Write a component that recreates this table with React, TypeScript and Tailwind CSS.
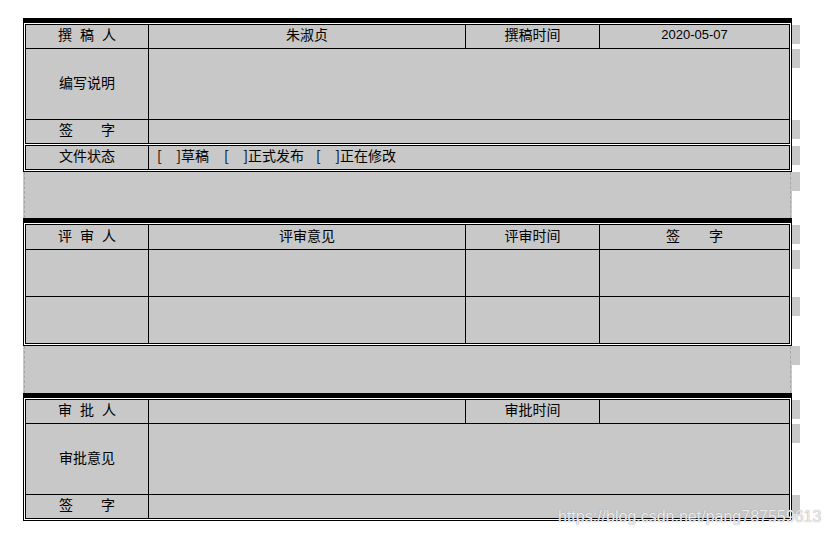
import React from 'react';

const cell = 'border-r border-b border-black flex items-center justify-center pb-[5px]';
const row24 = 'h-[24px]';

function Spread({ chars, className }: { chars: string[]; className: string }) {
  return (
    <span className={`flex ${className}`}>
      {chars.map((c, i) => (
        <span key={i}>{c}</span>
      ))}
    </span>
  );
}

// Word's row-end marker sitting just right of the table
function Marker() {
  return <span className="absolute left-[766px] top-0 w-[8px] h-[19px] bg-[#c8c8c8]" />;
}

function Gap({ h }: { h: string }) {
  return (
    <div className={`relative bg-[#c8c8c8] ${h}`}>
      <div className="ml-px w-[767px] h-full border-x border-dashed border-[#a6a6a6]" />
      <span className="absolute left-full top-0 w-[8px] h-[19px] bg-[#c8c8c8]" />
    </div>
  );
}

function Bracket() {
  return (
    <span className="inline-flex w-[24px] justify-between">
      <span>[</span>
      <span>]</span>
    </span>
  );
}

export default function App() {
  return (
    <div className="relative w-[830px] h-[537px] bg-white font-['Noto_Sans_CJK_SC',sans-serif] text-[14px] leading-none text-black overflow-hidden">
      <div className="pt-[18px] pl-[23px]">
        <div className="w-[769px]">
          <div className="h-[4px] bg-black" />

          {/* 撰稿 */}
          <div className="border border-black bg-white p-px">
            <div className="grid grid-cols-[123px_317px_134px_190px] border-l border-t border-black bg-[#c8c8c8]">
              <div className={`${cell} ${row24} relative`}>
                <Spread chars={['撰', '稿', '人']} className="gap-[8px]" />
                <Marker />
              </div>
              <div className={cell}>朱淑贞</div>
              <div className={cell}>撰稿时间</div>
              <div className={`${cell} font-['Liberation_Sans',sans-serif] text-[13px]`}>2020-05-07</div>

              <div className={`${cell} h-[71px] relative`}>
                编写说明
                <Marker />
              </div>
              <div className={`${cell} col-span-3`} />

              <div className={`${cell} ${row24} relative`}>
                <Spread chars={['签', '字']} className="gap-[28px]" />
                <Marker />
              </div>
              <div className={`${cell} col-span-3`} />
            </div>
            <div className="mt-px grid grid-cols-[123px_641px] border-l border-t border-black bg-[#c8c8c8]">
              <div className={`${cell} ${row24} relative`}>
                文件状态
                <Marker />
              </div>
              <div className="border-r border-b border-black flex items-center pl-[8px] pb-[5px]">
                <Bracket />
                <span>草稿</span>
                <span className="ml-[15px]"><Bracket /></span>
                <span>正式发布</span>
                <span className="ml-[12px]"><Bracket /></span>
                <span>正在修改</span>
              </div>
            </div>
          </div>

          <Gap h="h-[46px]" />
          <div className="h-[4px] bg-black" />

          {/* 评审 */}
          <div className="border border-black bg-white p-px">
            <div className="grid grid-cols-[123px_317px_134px_190px] border-l border-t border-black bg-[#c8c8c8]">
              <div className={`${cell} h-[25px] relative`}>
                <Spread chars={['评', '审', '人']} className="gap-[8px]" />
                <Marker />
              </div>
              <div className={cell}>评审意见</div>
              <div className={cell}>评审时间</div>
              <div className={cell}>
                <Spread chars={['签', '字']} className="gap-[29px]" />
              </div>

              {[0, 1].map((r) => (
                <React.Fragment key={r}>
                  <div className={`${cell} h-[47px] relative`}>
                    <Marker />
                  </div>
                  <div className={cell} />
                  <div className={cell} />
                  <div className={cell} />
                </React.Fragment>
              ))}
            </div>
          </div>

          <Gap h="h-[47px]" />
          <div className="h-[4px] bg-black" />

          {/* 审批 */}
          <div className="border border-black bg-white p-px">
            <div className="grid grid-cols-[123px_317px_134px_190px] border-l border-t border-black bg-[#c8c8c8]">
              <div className={`${cell} ${row24} relative`}>
                <Spread chars={['审', '批', '人']} className="gap-[8px]" />
                <Marker />
              </div>
              <div className={cell} />
              <div className={cell}>审批时间</div>
              <div className={cell} />

              <div className={`${cell} h-[71px] relative`}>
                审批意见
                <Marker />
              </div>
              <div className={`${cell} col-span-3`} />

              <div className={`${cell} ${row24} relative`}>
                <Spread chars={['签', '字']} className="gap-[28px]" />
                <Marker />
              </div>
              <div className={`${cell} col-span-3`} />
            </div>
          </div>
        </div>
      </div>

      <div className="absolute left-[558px] top-[508px] font-['Liberation_Sans',sans-serif] text-[16px] leading-[18px] text-[#ececec] [text-shadow:0_0_1px_#8a8a8a]">
        https://blog.csdn.net/pang787559613
      </div>
    </div>
  );
}
